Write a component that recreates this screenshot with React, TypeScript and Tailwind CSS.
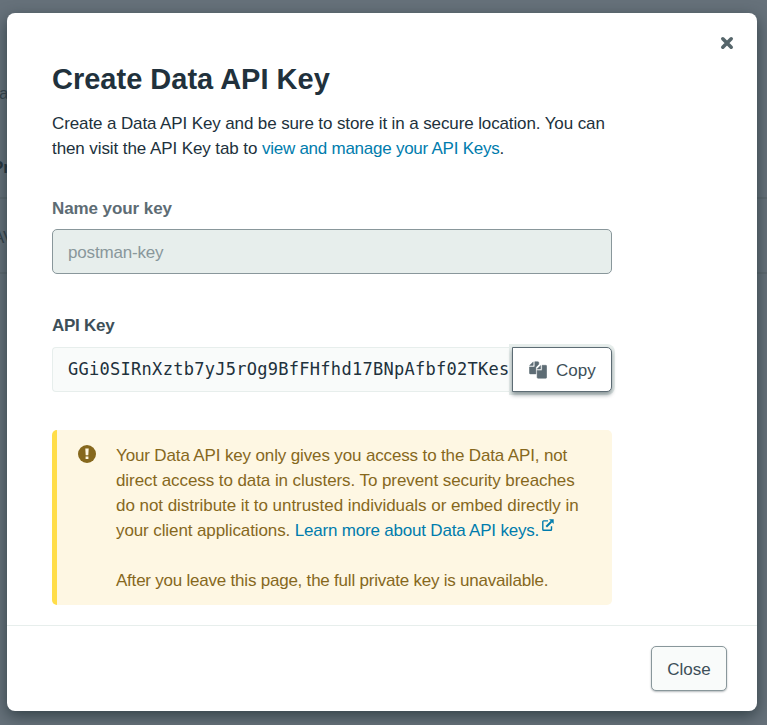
import React from "react";

const Line = ({ children, className }: { children: React.ReactNode; className: string }) => (
  <span className={`block whitespace-nowrap ${className}`}>{children}</span>
);

function CopyIcon() {
  return (
    <svg width="18" height="18" viewBox="0 0 18 18" className="shrink-0" fill="#5d6c74" stroke="#5d6c74" strokeWidth="0.5" strokeLinejoin="round">
      <path d="M4.2 0.9V4.4H0.6z" />
      <path d="M5.8 0.7H8.8a1 1 0 0 1 1 1V3.2L6.9 6.2V12.9H1.4a1 1 0 0 1-1-1V5.9H4.8a1 1 0 0 0 1-1z" />
      <path d="M11.6 4.6V8H8.1z" />
      <path d="M13.1 4.3H16.7a1 1 0 0 1 1 1V16.3a1 1 0 0 1-1 1H9.1a1 1 0 0 1-1-1V9.4H12.1a1 1 0 0 0 1-1z" />
    </svg>
  );
}

function ExternalIcon() {
  return (
    <svg width="12" height="12" viewBox="0 0 12 12" className="relative -top-[7px] ml-[3px] inline-block" fill="none" stroke="#007cad">
      <path d="M6 1.9H1.6a.8.8 0 0 0-.8.8v7.7a.8.8 0 0 0 .8.8h7.1a.8.8 0 0 0 .8-.8V7.2" strokeWidth="1.4" />
      <path d="M4.3 7.7L9.5 2.5" strokeWidth="2" />
      <path d="M7 .3h4.7V5z" fill="#007cad" stroke="none" />
    </svg>
  );
}

export default function App() {
  return (
    <div className="relative h-[725px] w-[767px] overflow-hidden bg-[#66717a] pl-[7px] pt-[13px] font-['Liberation_Sans',Arial,sans-serif] text-[17px] leading-[25px] text-[#21313c]">
      <div className="absolute inset-x-0 top-[197px] h-[77px] border-y-2 border-[#5e6970]" />
      <span className="absolute -left-[1px] top-[81px] text-[17px] text-[#35434c]">a</span>
      <span className="absolute -left-[8px] top-[155px] font-bold text-[#26343d]">Pr</span>
      <span className="absolute -left-[7px] top-[225px] text-[#35434c]">AV</span>

      <main className="relative flex h-[698px] w-[750px] flex-col rounded-[8px] bg-white shadow-[0_5px_15px_rgba(25,40,45,0.65)]">
        <svg width="14" height="14" viewBox="0 0 14 14" className="absolute left-[713px] top-[23px]">
          <path d="M2.8 2.8L11.2 11.2M11.2 2.8L2.8 11.2" stroke="#56666b" strokeWidth="3.6" strokeLinecap="round" />
        </svg>

        <section className="h-[613px] border-b border-[#e7eeec] pl-[45px] pt-[48px]">
          <h1 className="h-[36px] whitespace-nowrap text-[29px] font-bold leading-[36px]">Create Data API Key</h1>
          <div className="mt-[14px]">
            <Line className="tracking-[-0.115px]">Create a Data API Key and be sure to store it in a secure location. You can</Line>
            <Line className="tracking-[-0.09px]">
              then visit the API Key tab to <a className="tracking-[-0.25px] text-[#007cad]">view and manage your API Keys</a>.
            </Line>
          </div>

          <label className="mt-[35px] block whitespace-nowrap font-bold tracking-[-0.08px] text-[#5d6c74]">Name your key</label>
          <div className="mt-[8px] flex h-[45px] w-[560px] items-center rounded-[5px] border border-[#89979b] bg-[#e7eeec] pl-[15px] pt-[2px] tracking-[-0.17px] text-[#89979b]">
            <span>postman-key</span>
          </div>

          <label className="mt-[39px] block whitespace-nowrap font-bold tracking-[-0.25px] text-[#3d4f58]">API Key</label>
          <div className="mt-[9px] flex h-[45px] w-[560px]">
            <div className="flex w-[460px] items-center overflow-hidden rounded-l-[4px] border border-r-0 border-[#e7eeec] bg-[#f9fbfa] pl-[15px] font-['DejaVu_Sans_Mono',monospace] text-[17px] tracking-[0.28px]">
              GGi0SIRnXztb7yJ5rOg9BfFHfhd17BNpAfbf02TKes
            </div>
            <button className="flex w-[100px] items-center rounded-r-[5px] border border-[#5d6c74] bg-white pl-[16px] text-[#3d4f58] shadow-[0_3px_4px_rgba(6,22,33,0.4),0_0_0_3px_#e7eeec]">
              <CopyIcon />
              <span className="ml-[9px] pt-[2px]">Copy</span>
            </button>
          </div>

          <div className="mt-[38px] flex h-[175px] w-[560px] rounded-[5px] border-l-[5px] border-[#ffdd49] bg-[#fef7e3] pl-[21px] pt-[13px] text-[#86681d]">
            <svg width="18" height="18" viewBox="0 0 18 18" className="mt-[2px] shrink-0">
              <circle cx="9" cy="9" r="9" fill="#86681d" />
              <path d="M7.3 3.5h3.4l-.4 6.7H7.7zM7.6 11.4h2.8v2.6H7.6z" fill="#fef7e3" />
            </svg>
            <div className="ml-[20px]">
              <Line className="tracking-[-0.14px]">Your Data API key only gives you access to the Data API, not</Line>
              <Line className="tracking-[-0.08px]">direct access to data in clusters. To prevent security breaches</Line>
              <Line className="tracking-[-0.05px]">do not distribute it to untrusted individuals or embed directly in</Line>
              <Line className="h-[25px] tracking-[-0.1px]">
                your client applications. <a className="tracking-[-0.2px] text-[#007cad]">Learn more about Data API keys.</a>
                <ExternalIcon />
              </Line>
              <Line className="mt-[25px] tracking-[-0.22px]">After you leave this page, the full private key is unavailable.</Line>
            </div>
          </div>
        </section>

        <footer className="flex justify-end pr-[30px] pt-[20px]">
          <button className="flex h-[45px] w-[76px] items-center justify-center rounded-[5px] border border-[#89979b] bg-[#f9fbfa] pt-[2px] text-[#3d4f58] shadow-[0_1px_2px_rgba(6,22,33,0.3)]">
            Close
          </button>
        </footer>
      </main>
    </div>
  );
}
